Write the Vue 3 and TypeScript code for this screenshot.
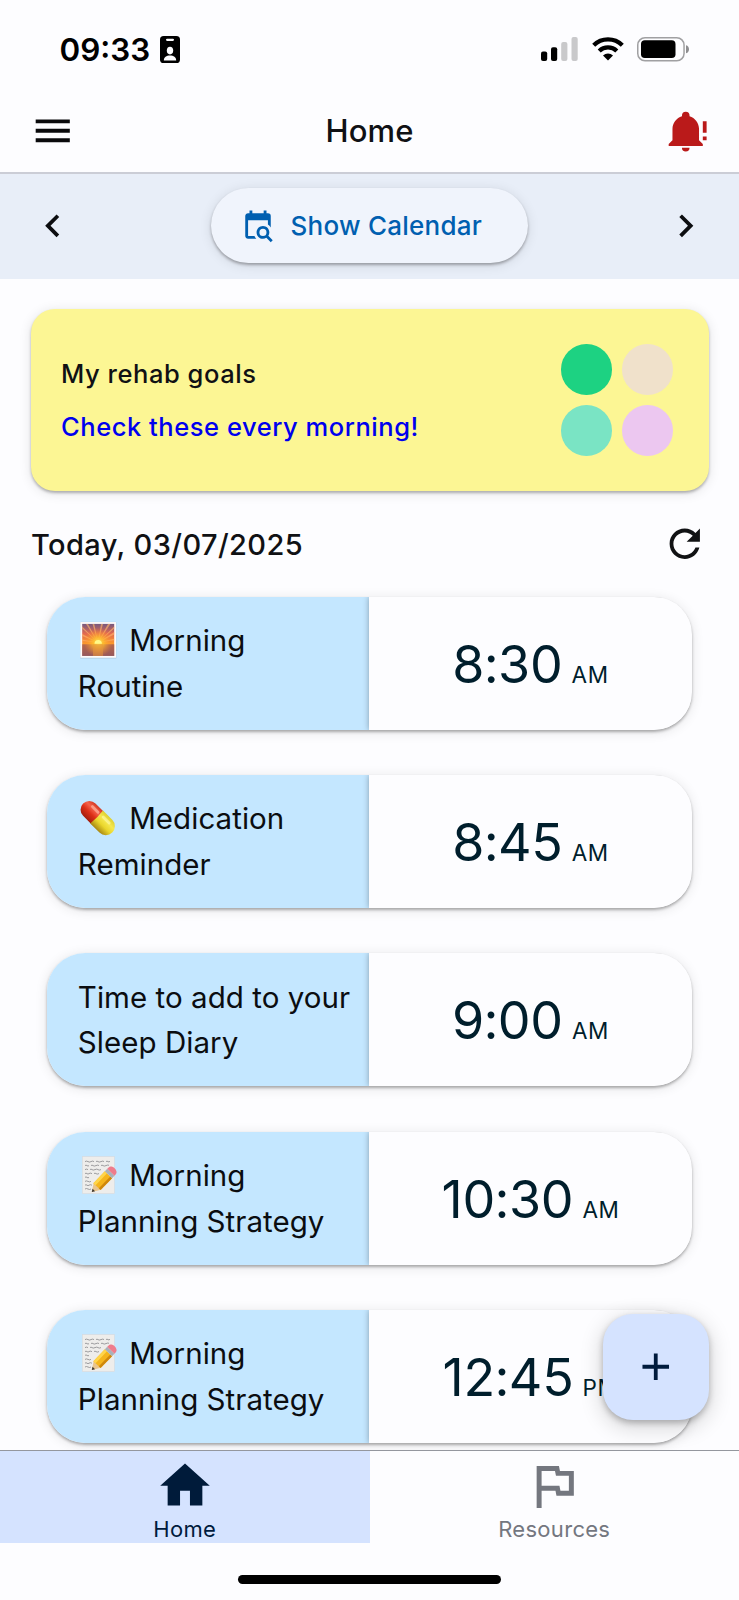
<script setup lang="ts">
type Emoji = 'sunrise' | 'pill' | 'memo'

interface Reminder {
  id: number
  emoji?: Emoji
  title: string
  hours: string
  minutes: string
  period: 'AM' | 'PM'
}

const reminders: Reminder[] = [
  { id: 1, emoji: 'sunrise', title: 'Morning Routine', hours: '8', minutes: '30', period: 'AM' },
  { id: 2, emoji: 'pill', title: 'Medication Reminder', hours: '8', minutes: '45', period: 'AM' },
  { id: 3, title: 'Time to add to your Sleep Diary', hours: '9', minutes: '00', period: 'AM' },
  { id: 4, emoji: 'memo', title: 'Morning Planning Strategy', hours: '10', minutes: '30', period: 'AM' },
  { id: 5, emoji: 'memo', title: 'Morning Planning Strategy', hours: '12', minutes: '45', period: 'PM' },
]

const goalDots: string[] = ['green', 'sand', 'mint', 'lilac']
</script>

<template>
  <div class="phone">
    <div class="status">
      <span class="clock">09:33</span>
      <svg class="badge" viewBox="0 0 20 27">
        <rect width="20" height="27" rx="3.6" fill="#000" />
        <rect x="6" y="2.7" width="8" height="2.2" rx="1.1" fill="#fdfdff" />
        <ellipse cx="10" cy="14.6" rx="3.2" ry="3.8" fill="#fdfdff" />
        <path d="M3.8 24.6c0-3.6 2.6-5.2 6.2-5.2s6.200 1.600 6.200 5.200z" fill="#fdfdff" />
      </svg>
      <div class="status-right">
        <svg class="signal" viewBox="0 0 37 24">
          <rect x="0" y="14.500" width="6.200" height="9.500" rx="2" fill="#000" />
          <rect x="10" y="10.300" width="6.200" height="13.700" rx="2" fill="#000" />
          <rect x="20.200" y="5" width="6.200" height="19" rx="2" fill="#c9c9cb" />
          <rect x="30.500" y="0" width="6.200" height="24" rx="2" fill="#c9c9cb" />
        </svg>
        <svg class="wifi" viewBox="0 0 32 24">
          <g fill="none" stroke="#000" stroke-width="4.300">
            <path d="M1.700 8.200a20.500 20.500 0 0 1 28.600 0" />
            <path d="M7.200 14a12.600 12.600 0 0 1 17.600 0" />
          </g>
          <path d="M11 18.600a7.200 7.200 0 0 1 10 0l-5 5z" fill="#000" />
        </svg>
        <svg class="battery" viewBox="0 0 53 25">
          <rect x=".75" y=".75" width="46.300" height="23" rx="7.300" fill="none" stroke="#a0a0a2" stroke-width="1.500" />
          <rect x="4" y="3.300" width="34.500" height="17.800" rx="3.800" fill="#000" />
          <path d="M49 8.300c2.100.6 3 2.100 3 4s-.9 3.400-3 4z" fill="#8e8e90" />
        </svg>
      </div>
    </div>

    <header class="topbar">
      <svg class="icon" viewBox="0 0 24 24" fill="#0a0a0c">
        <path d="M3 6h18v2H3zM3 11h18v2H3zM3 16h18v2H3z" />
      </svg>
      <h1>Home</h1>
      <svg class="icon" viewBox="0 0 24 24" fill="#ba1a1a">
        <path d="M23 7V13H21V7M21 15H23V17H21M12 2A2 2 0 0 0 10 4A2 2 0 0 0 10 4.290C7.120 5.140 5 7.820 5 11V17L3 19V20H21V19L19 17V11C19 7.820 16.880 5.140 14 4.290A2 2 0 0 0 14 4A2 2 0 0 0 12 2M10 21A2 2 0 0 0 12 23A2 2 0 0 0 14 21Z" />
      </svg>
    </header>

    <div class="datebar">
      <svg class="icon" viewBox="0 0 24 24" fill="#0c0d10">
        <path d="M15.410 7.410L14 6l-6 6 6 6 1.410-1.410L10.830 12z" />
      </svg>
      <button class="calendar" type="button">
        <svg viewBox="0 0 24 24" fill="#005fb0">
          <path d="M15.500 12C18 12 20 14 20 16.500C20 17.380 19.750 18.210 19.310 18.900L22.390 22L21 23.390L17.880 20.320C17.190 20.750 16.370 21 15.500 21C13 21 11 19 11 16.500C11 14 13 12 15.500 12M15.500 14A2.500 2.500 0 0 0 13 16.500A2.500 2.500 0 0 0 15.500 19A2.500 2.500 0 0 0 18 16.500A2.500 2.500 0 0 0 15.500 14M19 8H5V19H9.500C9.810 19.750 10.260 20.420 10.810 21H5C3.890 21 3 20.100 3 19V5C3 3.890 3.890 3 5 3H6V1H8V3H16V1H18V3H19A2 2 0 0 1 21 5V13.030C20.500 12.220 19.800 11.540 19 11V8Z" />
        </svg>
        <span>Show Calendar</span>
      </button>
      <svg class="icon" viewBox="0 0 24 24" fill="#0c0d10">
        <path d="M8.590 16.590L13.170 12 8.590 7.410 10 6l6 6-6 6z" />
      </svg>
    </div>

    <main class="content">
      <section class="goals">
        <div class="goals-text">
          <p>My rehab goals</p>
          <p class="link">Check these every morning!</p>
        </div>
        <div class="dots">
          <span v-for="dot in goalDots" :key="dot" class="dot" :class="dot"></span>
        </div>
      </section>

      <div class="today">
        <h2>Today, 03/07/2025</h2>
        <svg class="icon" viewBox="0 0 24 24" fill="#111214">
          <path d="M17.650 6.350C16.200 4.900 14.210 4 12 4c-4.420 0-7.990 3.580-7.990 8s3.570 8 7.990 8c3.730 0 6.840-2.550 7.730-6h-2.080c-.82 2.330-3.040 4-5.650 4-3.310 0-6-2.690-6-6s2.690-6 6-6c1.660 0 3.140.690 4.220 1.780L13 11h7V4l-2.350 2.350z" />
        </svg>
      </div>

      <div class="list">
        <article v-for="item in reminders" :key="item.id" class="reminder">
          <div class="label">
            <p>
              <svg v-if="item.emoji === 'sunrise'" class="emoji" viewBox="0 0 38 38">
                <defs>
                  <linearGradient id="sky" x1="0" y1="0" x2="0" y2="1">
                    <stop offset="0" stop-color="#75587f" />
                    <stop offset=".3" stop-color="#e2694f" />
                    <stop offset=".62" stop-color="#fb9a2c" />
                    <stop offset=".68" stop-color="#d5783a" />
                    <stop offset="1" stop-color="#8c5560" />
                  </linearGradient>
                  <radialGradient id="glow" cx=".5" cy=".58" r=".45">
                    <stop offset="0" stop-color="#fff45a" />
                    <stop offset=".35" stop-color="#ffc42e" stop-opacity=".9" />
                    <stop offset="1" stop-color="#ff8a2e" stop-opacity="0" />
                  </radialGradient>
                </defs>
                <rect x="1" y=".8" width="36.500" height="37" rx="1" fill="#b5d3e8" />
                <rect x="1.400" y="1.100" width="35.600" height="35.600" fill="#fffaf8" />
                <rect x="3.200" y="2.900" width="32" height="32" fill="url(#sky)" />
                <path d="M19 21.500L3.200 15v-2zM19 21.500L7 3h2zM19 21.500L13.500 3h1.800zM19 21.500L22 3h2zM19 21.500L29 3h2.400zM19 21.500L35.200 11v2.500zM19 21.500L3.200 20v-1.500zM19 21.500l16.200-3.800v1.500zM19 21.500L3.200 7.500v-2zM19 21.500L35.200 5.500v2z" fill="#ffb568" opacity=".65" />
                <path d="M3.200 23.300h32v11.600h-32z" fill="#9d5a58" opacity=".6" />
                <rect x="3.200" y="2.900" width="32" height="32" fill="url(#glow)" opacity=".85" />
                <path d="M14 23.300h10v11.600H14z" fill="#e8963c" opacity=".55" />
                <path d="M15.500 22.800a3.700 3.900 0 0 1 7.400 0z" fill="#fff98a" />
              </svg>
              <svg v-else-if="item.emoji === 'pill'" class="emoji" viewBox="0 0 38 38">
                <defs>
                  <linearGradient id="red" x1="0" y1="0" x2="0" y2="1">
                    <stop offset="0" stop-color="#d33a24" />
                    <stop offset=".3" stop-color="#f5624a" />
                    <stop offset=".6" stop-color="#dd2f17" />
                    <stop offset="1" stop-color="#a31c0c" />
                  </linearGradient>
                  <linearGradient id="yellow" x1="0" y1="0" x2="0" y2="1">
                    <stop offset="0" stop-color="#ded032" />
                    <stop offset=".3" stop-color="#f5e850" />
                    <stop offset=".6" stop-color="#ead62c" />
                    <stop offset="1" stop-color="#a88712" />
                  </linearGradient>
                </defs>
                <g transform="translate(18.600 19) rotate(45) scale(.94)">
                  <path d="M0-9.300H-12.500a9.300 9.300 0 0 0 0 18.600H0z" fill="url(#red)" />
                  <path d="M-1.500-9.600H12.400a9.600 9.600 0 0 1 0 19.200H-1.500q1.500-9.600 0-19.200z" fill="url(#yellow)" />
                  <rect x="-14" y="-6.200" width="11.500" height="3" rx="1.500" fill="#ffb09c" opacity=".75" />
                  <rect x="2" y="-6.400" width="12" height="3" rx="1.500" fill="#fffbb0" opacity=".6" />
                </g>
              </svg>
              <svg v-else-if="item.emoji === 'memo'" class="emoji" viewBox="0 0 38 38">
                <rect x="3.300" y=".6" width="32" height="37" fill="#eeedeb" stroke="#d7dadd" stroke-width=".6" />
                <g fill="none" stroke="#88888b" stroke-width=".8">
                  <path d="M6 5.600q1.500-1 3 0t3 0 3 0M17 5.600q1-1 2 0t3 0 3 0M27 5.600q1-1 2 0t2-.4" />
                  <path d="M6 9.600q1-1 2 0t2 0M12 9.600q1-1 2 0t3 0 3 0M22 9.600q1-1 2 0t3 0 3-.3" />
                  <path d="M6 13.600q1.500-1 3 0M11 13.600q1-1 2 0t3 0 3 0 3 0" />
                  <path d="M6 17.600q1-1 2 0t2 0 3 0M15 17.600q1-1 2 0t3 0" />
                  <path d="M6 21.400q1-1 2 0t2 0" />
                  <path d="M6 25.400q1.500-1 3 0t3 0" />
                  <path d="M6 29.200q1-1 2 0t2 0 3 0" />
                  <path d="M6 33q1.500-1 3 0t3 0" />
                </g>
                <g transform="translate(12.800 36) rotate(-46)">
                  <path d="M0 0l8-5v10z" fill="#e9c58e" />
                  <path d="M0 0l2.900-1.800v3.600z" fill="#3d3832" />
                  <rect x="7.500" y="-5" width="16.500" height="10" fill="#f5b51c" />
                  <rect x="7.500" y="-5" width="16.500" height="3" fill="#ffd54a" />
                  <rect x="7.500" y="2.500" width="16.500" height="2.500" fill="#cf870c" />
                  <rect x="24" y="-5" width="3.400" height="10" fill="#a9b1ba" />
                  <path d="M27.400-5h2a3.500 5 0 0 1 0 10h-2z" fill="#ee7c8c" />
                </g>
              </svg>
              {{ item.title }}
            </p>
          </div>
          <div class="time">
            <span class="digits">{{ item.hours }}<span class="colon">:</span>{{ item.minutes }}</span>
            <span class="period">{{ item.period }}</span>
          </div>
        </article>
      </div>

      <button class="fab" type="button" aria-label="Add">
        <svg class="icon" viewBox="0 0 24 24" fill="#001b3d">
          <path d="M19 13h-6v6h-2v-6H5v-2h6V5h2v6h6z" />
        </svg>
      </button>
    </main>

    <nav class="tabs">
      <div class="tab active">
        <svg viewBox="0 0 24 24" fill="#001b3a">
          <path d="M10 20V14H14V20H19V12H22L12 3L2 12H5V20H10Z" />
        </svg>
        <span>Home</span>
      </div>
      <div class="tab">
        <svg viewBox="0 0 24 24" fill="#74777f">
          <path fill-rule="evenodd" d="M5 4H14L14.400 6H20V16H13L12.600 14H7V21H5ZM7 6V12H14.200L14.600 14H18V8H12.800L12.400 6Z" />
        </svg>
        <span>Resources</span>
      </div>
    </nav>
    <div class="home-area"><div class="indicator"></div></div>
  </div>
</template>

<style>
body {
  margin: 0;
  background: #fdfdff;
}
</style>

<style scoped>
.phone {
  display: flex;
  flex-direction: column;
  width: 739px;
  height: 1600px;
  overflow: hidden;
  background: #fdfdff;
  color: #101114;
  font-family: Inter, "Liberation Sans", sans-serif;
}

h1,
h2,
p {
  margin: 0;
  font-weight: inherit;
}

button {
  border: 0;
  padding: 0;
  font: inherit;
}

.icon {
  display: block;
  flex: none;
  width: 45.5px;
  height: 45.5px;
}

.status {
  display: flex;
  align-items: center;
  flex: none;
  height: 98.6px;
  padding: 0 50px 0 59.5px;
}

.clock {
  width: 100.500px;
  padding-top: 1px;
  color: #000;
  font-size: 31.400px;
  font-weight: 560;
  letter-spacing: 0;
}

.badge {
  width: 20px;
  height: 27px;
}

.status-right {
  display: flex;
  align-items: center;
  margin-left: auto;
}

.signal {
  width: 37px;
  height: 24px;
  margin-right: 14px;
}

.wifi {
  width: 32px;
  height: 24px;
  margin-right: 13.500px;
}

.battery {
  width: 53px;
  height: 25px;
  margin-right: -1px;
}

.topbar {
  display: flex;
  align-items: center;
  justify-content: space-between;
  box-sizing: border-box;
  flex: none;
  height: 75px;
  padding: 0 30.200px 8px;
  border-bottom: 2px solid #cbcdd6;
}

.topbar h1 {
  padding-bottom: 2px;
  font-size: 31px;
  font-weight: 550;
  letter-spacing: 0.15px;
}

.datebar {
  display: flex;
  align-items: center;
  justify-content: space-between;
  box-sizing: border-box;
  flex: none;
  height: 105.100px;
  padding: 0 30.200px 1.200px;
  background: #e8eef8;
}

.calendar {
  display: flex;
  align-items: center;
  width: 317px;
  height: 75px;
  padding-left: 30px;
  box-sizing: border-box;
  border-radius: 38px;
  background: #f0f4fc;
  box-shadow: 0 2px 3px rgba(0, 0, 0, 0.3), 0 2px 11px 2px rgba(0, 0, 0, 0.08);
  color: #005fb0;
  font-size: 26px;
  font-weight: 470;
  letter-spacing: 0.25px;
}

.calendar svg {
  width: 34px;
  height: 34px;
  margin-right: 15.500px;
}

.content {
  position: relative;
  flex: none;
  height: 1171.300px;
  overflow: hidden;
}

.goals {
  display: flex;
  align-items: center;
  justify-content: space-between;
  box-sizing: border-box;
  height: 182px;
  margin: 30.300px 30.500px 0 31px;
  padding: 0 36px 0 30px;
  border-radius: 24px;
  background: #fcf694;
  box-shadow: 0 2px 3px rgba(0, 0, 0, 0.28), 0 2px 11px 2px rgba(0, 0, 0, 0.08);
  font-size: 25.500px;
  font-weight: 450;
  line-height: 53px;
  letter-spacing: 0.55px;
}

.link {
  color: #0000ee;
}

.dots {
  display: grid;
  grid-template-columns: 50.500px 50.500px;
  gap: 10.200px;
}

.dot {
  height: 50.500px;
  border-radius: 50%;
}

.green {
  background: #1dd282;
}

.sand {
  background: #f0e1cb;
}

.mint {
  background: #7ae4c4;
}

.lilac {
  background: #ecc7f0;
}

.today {
  display: flex;
  align-items: center;
  justify-content: space-between;
  height: 105.700px;
  padding: 0 31.200px 0 31px;
}

.today h2 {
  padding-top: 2px;
  font-size: 29px;
  font-weight: 530;
  letter-spacing: 0.4px;
}

.list {
  display: flex;
  flex-direction: column;
  gap: 45.300px;
  padding: 0 47px 0 47px;
}

.reminder {
  display: flex;
  height: 133px;
  border-radius: 38px;
  overflow: hidden;
  flex: none;
  box-shadow: 0 2px 3px rgba(0, 0, 0, 0.3), 0 2px 11px 2px rgba(0, 0, 0, 0.08);
}

.label {
  display: flex;
  align-items: center;
  box-sizing: border-box;
  width: 322px;
  padding: 1px 0 0 30.800px;
  background: #c4e7ff;
  color: #0b0d10;
  font-size: 29.500px;
  line-height: 45.500px;
  letter-spacing: 0.05px;
}

.label p {
  width: 275px;
}

.emoji {
  width: 38px;
  height: 38px;
  margin: 0 3.500px 0 1.500px;
  vertical-align: -7.500px;
}

.time {
  display: flex;
  align-items: baseline;
  justify-content: center;
  flex: 1;
  background: #fdfdff;
  box-shadow: 0 0 6px rgba(0, 0, 0, 0.32);
  color: #001e2c;
  line-height: 135px;
}

.digits {
  font-size: 52px;
  letter-spacing: -0.2px;
}

.colon {
  margin: 0 -0.500px;
}

.period {
  margin-left: 9px;
  font-size: 22.500px;
  letter-spacing: 0.6px;
}

.fab {
  position: absolute;
  right: 30.500px;
  bottom: 30px;
  display: grid;
  place-items: center;
  width: 105.500px;
  height: 105.500px;
  border-radius: 30px;
  background: #d5e3ff;
  box-shadow: 0 3px 6px rgba(0, 0, 0, 0.25), 0 6px 20px 4px rgba(0, 0, 0, 0.13);
}

.tabs {
  display: flex;
  flex: none;
  box-sizing: border-box;
  height: 93px;
  border-top: 1px solid #94979e;
}

.tab {
  display: flex;
  flex-direction: column;
  align-items: center;
  flex: 1;
  color: #74777f;
  font-size: 22px;
  line-height: 28px;
  letter-spacing: 0.3px;
}

.tab svg {
  width: 60px;
  height: 60px;
  margin: 5px 0 -0.500px;
}

.active {
  background: #d5e3ff;
  color: #001b3d;
}

.home-area {
  display: flex;
  justify-content: center;
  flex: 1;
}

.indicator {
  width: 263.500px;
  height: 9.500px;
  margin-top: 32px;
  border-radius: 5px;
  background: #000;
}
</style>
